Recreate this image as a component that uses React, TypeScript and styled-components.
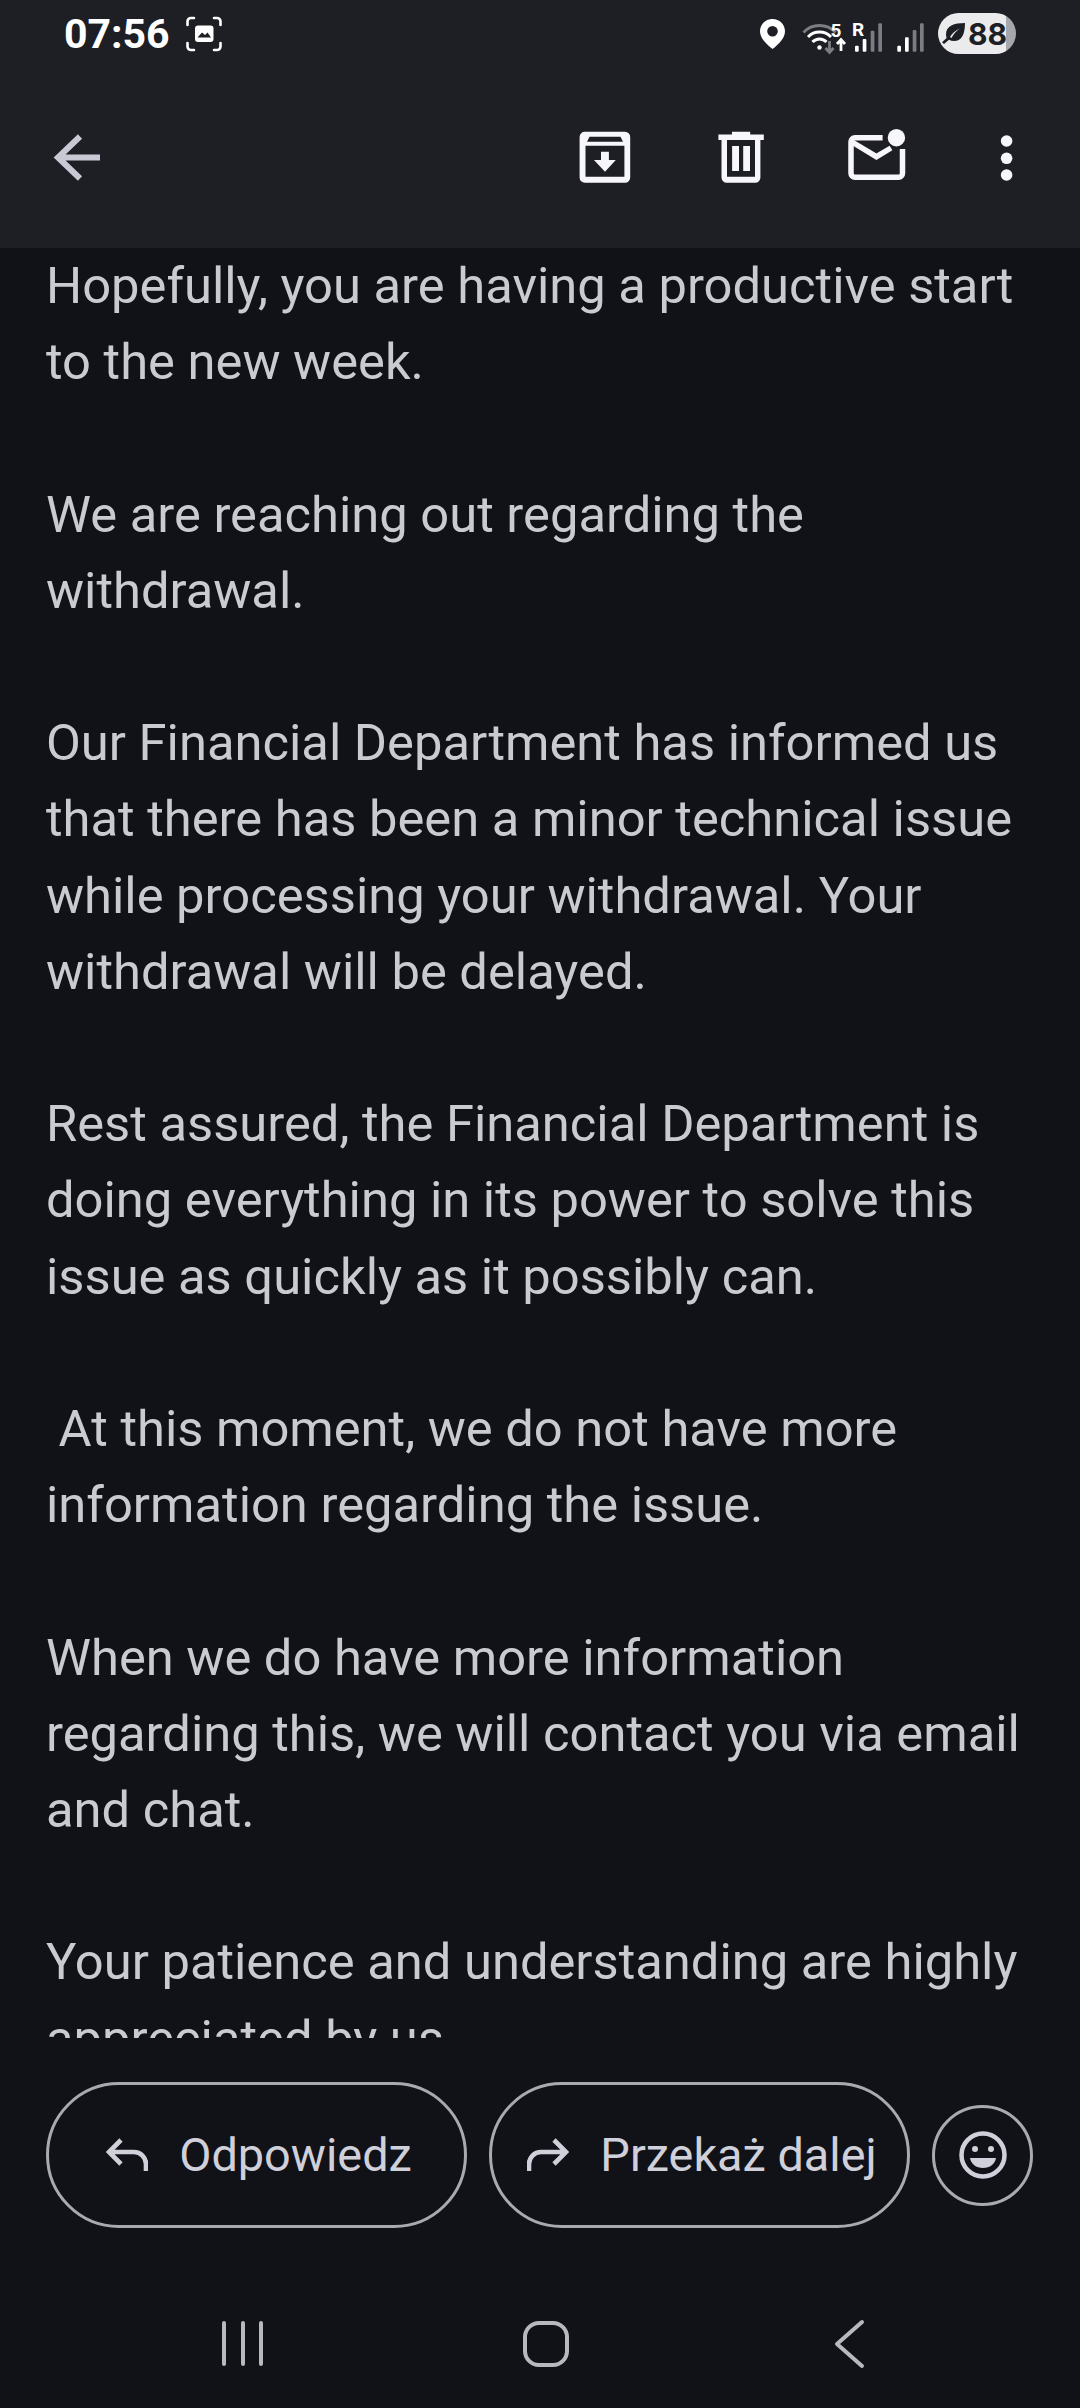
import React from 'react';
import styled, { createGlobalStyle } from 'styled-components';

const GlobalStyle = createGlobalStyle`
  html, body {
    margin: 0;
    padding: 0;
    background: #111218;
  }
`;

const Screen = styled.div`
  width: 1080px;
  height: 2408px;
  display: flex;
  flex-direction: column;
  overflow: hidden;
  background: #111218;
  font-family: Roboto, "Noto Sans", sans-serif;
`;

const Header = styled.header`
  height: 248px;
  flex: none;
  background: #1e1f25;
`;

const StatusBar = styled.div`
  height: 67px;
  display: flex;
  align-items: center;
  padding: 0 64px 0 64px;
`;

const Clock = styled.span`
  font-size: 41px;
  font-weight: 700;
  color: #ffffff;
  margin-right: 16px;
`;

const StatusRight = styled.div`
  margin-left: auto;
  display: flex;
  align-items: center;
  gap: 15px;
`;

const Battery = styled.div`
  width: 78px;
  height: 41px;
  margin-left: -7px;
  border-radius: 21px;
  display: flex;
  align-items: center;
  gap: 2px;
  padding-left: 4px;
  box-sizing: border-box;
  background: linear-gradient(90deg, #ebebee 87%, #a6a7aa 87%);
  color: #1e1f25;
  font-family: Inter, Roboto, sans-serif;
  font-size: 30px;
  font-weight: 700;
`;

const Toolbar = styled.div`
  height: 180px;
  display: flex;
  align-items: center;
  padding: 0 37px 0 47px;
`;

const ToolActions = styled.div`
  margin-left: auto;
  display: flex;
  gap: 76px;
`;

const Message = styled.div`
  height: 1790px;
  flex: none;
  overflow: hidden;
  padding: 0 46px;
  color: #cacad1;
  font-size: 50.7px;
  line-height: 76.2px;
`;

const Paragraph = styled.p`
  margin: 0 0 76.2px;
  white-space: pre-wrap;
`;

const ActionRow = styled.div`
  display: flex;
  align-items: center;
  gap: 22px;
  padding: 44px 45px 0 46px;
`;

const PillButton = styled.button`
  flex: none;
  width: 421px;
  height: 146px;
  box-sizing: border-box;
  display: flex;
  align-items: center;
  justify-content: center;
  gap: 31px;
  background: transparent;
  border: 3px solid #a9aab1;
  border-radius: 73px;
  color: #d0d0da;
  font-family: inherit;
  font-size: 46.8px;
  padding: 0 0 0 5px;
`;

const EmojiButton = styled.button`
  flex: none;
  width: 101px;
  height: 101px;
  box-sizing: border-box;
  display: flex;
  align-items: center;
  justify-content: center;
  background: transparent;
  border: 3px solid #a9aab1;
  border-radius: 50%;
  padding: 0;
`;

const NavBar = styled.nav`
  display: grid;
  grid-template-columns: repeat(3, 303px);
  justify-items: center;
  padding: 86px 80px 0 91px;
`;

const Icon = styled.svg`
  display: block;
  flex: none;
`;

const Tool = styled(Icon).attrs({ width: 60, height: 60, viewBox: '0 0 60 60' })`
  color: #f7f6fb;
`;

const NavIcon = styled(Icon).attrs({ width: 60, height: 60, viewBox: '0 0 60 60', fill: 'none' })`
  stroke: #b8b9be;
  stroke-width: 4;
  stroke-linecap: round;
  stroke-linejoin: round;
`;

const NetText = styled.text`
  fill: #ffffff;
  font-family: Roboto, sans-serif;
  font-size: 19px;
  font-weight: 700;
`;

const paragraphs = [
  'Hopefully, you are having a productive start to the new week.',
  'We are reaching out regarding the withdrawal.',
  'Our Financial Department has informed us that there has been a minor technical issue while processing your withdrawal. Your withdrawal will be delayed.',
  'Rest assured, the Financial Department is doing everything in its power to solve this issue as quickly as it possibly can.',
  ' At this moment, we do not have more information regarding the issue.',
  'When we do have more information regarding this, we will contact you via email and chat.',
  'Your patience and understanding are highly appreciated by us.',
];

const ScreenshotIcon = () => (
  <Icon width="36" height="36" viewBox="0 0 36 36" fill="none">
    <path
      d="M8 2H5a3.5 3.5 0 0 0-3.5 3.5V9M28 2h3a3.5 3.5 0 0 1 3.500 3.5V9M8 34H5a3.500 3.500 0 0 1-3.500-3.500V27M28 34h3a3.500 3.500 0 0 0 3.500-3.500V27"
      stroke="#fff"
      strokeWidth="2.6"
      strokeLinecap="round"
    />
    <rect x="9" y="9.500" width="18.500" height="16.500" rx="3" fill="#fff" />
    <path d="M11.500 21.500l4.500-5 3 2.500 2.500-2.500 3.500 5z" fill="#1e1f25" />
  </Icon>
);

const LocationIcon = () => (
  <Icon width="25" height="30" viewBox="0 0 25 30">
    <path
      fillRule="evenodd"
      fill="#fff"
      d="M12.500 0C5.600 0 0 5.400 0 12.200 0 19 6 25 12.500 30 19 25 25 19 25 12.200 25 5.400 19.400 0 12.500 0zm0 7a5.300 5.300 0 1 1 0 10.600 5.300 5.300 0 0 1 0-10.600z"
    />
  </Icon>
);

const bars = [
  { x: 55, top: 41.7, on: true },
  { x: 62.7, top: 35, on: true },
  { x: 70.7, top: 26.7, on: false },
  { x: 78.3, top: 19.3, on: false },
  { x: 97.3, top: 41.7, on: true },
  { x: 105, top: 33.3, on: true },
  { x: 112.7, top: 26, on: false },
  { x: 120, top: 19.3, on: false },
];

const NetworkIcons = () => (
  <Icon width="130" height="60" viewBox="0 0 130 60" fill="none">
    <path d="M3.500 28.500a22 22 0 0 1 32 0" stroke="#7c7d82" strokeWidth="3" />
    <path d="M8 33a16 16 0 0 1 23 0M12.500 38a9.500 9.500 0 0 1 14 0" stroke="#fff" strokeWidth="3" />
    <circle cx="19.500" cy="43.500" r="2.200" fill="#fff" />
    <NetText x="30.500" y="33">5</NetText>
    <path d="M29.500 37v11M25.500 44l4 4.500 4-4.500" stroke="#7c7d82" strokeWidth="2.800" />
    <path d="M41 47V36M37 40l4-4.500 4 4.500" stroke="#fff" strokeWidth="2.800" />
    <NetText x="52" y="32">R</NetText>
    {bars.map((b) => (
      <rect
        key={b.x}
        x={b.x}
        y={b.top}
        width="3.700"
        height={47.7 - b.top}
        rx="1"
        fill={b.on ? '#fff' : '#7c7d82'}
      />
    ))}
  </Icon>
);

const LeafIcon = () => (
  <Icon width="24" height="23" viewBox="0 0 24 26" preserveAspectRatio="none">
    <path
      d="M23 1C12 1 4 4 4 14c0 1.500.2 2.800.6 4L0 23l2 2 5-5c1.500 1 3.200 1.500 5 1.500C20 21.500 23 13 23 1zM8 17c2-4 5-7 10-10-4 3.500-6.500 6.500-8.500 11z"
      fill="#1e1f25"
      fillRule="evenodd"
    />
  </Icon>
);

const App: React.FC = () => {
  return (
    <Screen>
      <GlobalStyle />
      <Header>
        <StatusBar>
          <Clock>07:56</Clock>
          <ScreenshotIcon />
          <StatusRight>
            <LocationIcon />
            <NetworkIcons />
            <Battery>
              <LeafIcon />
              <span>88</span>
            </Battery>
          </StatusRight>
        </StatusBar>
        <Toolbar>
          <Tool fill="none" aria-label="Back">
            <path
              d="M10.500 30.500H53M33 9.500L11 30.500l22 21"
              stroke="#c9c9d6"
              strokeWidth="6"
              strokeLinejoin="miter"
            />
          </Tool>
          <ToolActions>
            <Tool aria-label="Archive">
              <path
                fill="currentColor"
                fillRule="evenodd"
                d="M10 4.700h40a5.200 5.200 0 0 1 5.200 5.200v40.600a5.200 5.200 0 0 1-5.200 5.200H10a5.200 5.200 0 0 1-5.400-5.200V9.900A5.200 5.200 0 0 1 10 4.700zM10.500 18.700v31h38.900v-31zM12 14.700h36l-2.500-5h-31z"
              />
              <path fill="currentColor" d="M26 24.700h7.900V33h6.900L30 44.700 19 33h7z" />
            </Tool>
            <Tool aria-label="Delete">
              <path
                fill="currentColor"
                fillRule="evenodd"
                d="M21 4.700h18.200v2.800h13.600V13h-3.400v37.500a5.200 5.200 0 0 1-5.200 5.200H15.700a5.200 5.200 0 0 1-5.200-5.200V13H7.400V7.500H21zM16 13v36.700h28V13z"
              />
              <path fill="currentColor" d="M21.100 19H28v25h-6.900zM32.200 19H39v25h-6.800z" />
            </Tool>
            <Tool fill="none" aria-label="Mark unread">
              <path
                d="M35.600 10.800H8a4 4 0 0 0-4 4v31.500a4 4 0 0 0 4 4h43.500a4 4 0 0 0 4-4V22"
                stroke="currentColor"
                strokeWidth="5.500"
              />
              <path d="M5 15l24.400 14.700L44 21" stroke="currentColor" strokeWidth="5.500" />
              <circle cx="49.400" cy="10.700" r="8.700" fill="currentColor" />
            </Tool>
            <Tool aria-label="More">
              <circle cx="23.600" cy="14" r="5.800" fill="currentColor" />
              <circle cx="23.600" cy="31.300" r="5.800" fill="currentColor" />
              <circle cx="23.600" cy="48" r="5.800" fill="currentColor" />
            </Tool>
          </ToolActions>
        </Toolbar>
      </Header>

      <Message>
        {paragraphs.map((text) => (
          <Paragraph key={text}>{text}</Paragraph>
        ))}
      </Message>

      <ActionRow>
        <PillButton>
          <Icon width="42" height="34" viewBox="0 0 42 34" fill="none">
            <path
              d="M40 33V26a12 12 0 0 0-12-12H3M15 2L3 14l12 12"
              stroke="#d0d0da"
              strokeWidth="4.600"
            />
          </Icon>
          Odpowiedz
        </PillButton>
        <PillButton>
          <Icon width="42" height="34" viewBox="0 0 42 34" fill="none">
            <path
              d="M2 33V26a12 12 0 0 1 12-12h25M27 2l12 12-12 12"
              stroke="#d0d0da"
              strokeWidth="4.600"
            />
          </Icon>
          Przekaż dalej
        </PillButton>
        <EmojiButton aria-label="Emoji">
          <Icon width="48" height="48" viewBox="0 0 48 48" fill="none">
            <circle cx="24" cy="24" r="21.500" stroke="#d0d0da" strokeWidth="4.500" />
            <circle cx="16" cy="18" r="3" fill="#d0d0da" />
            <circle cx="32" cy="18" r="3" fill="#d0d0da" />
            <path d="M11 27h26c-1 6-6 10-13 10s-12-4-13-10z" fill="#d0d0da" />
          </Icon>
        </EmojiButton>
      </ActionRow>

      <NavBar>
        <NavIcon aria-label="Recent apps">
          <path d="M11 9v41M30 9v41M48 9v41" />
        </NavIcon>
        <NavIcon aria-label="Home">
          <rect x="9" y="9" width="42" height="42" rx="14" />
        </NavIcon>
        <NavIcon aria-label="Back">
          <path d="M43 8L18 30l25 22" />
        </NavIcon>
      </NavBar>
    </Screen>
  );
};

export default App;
